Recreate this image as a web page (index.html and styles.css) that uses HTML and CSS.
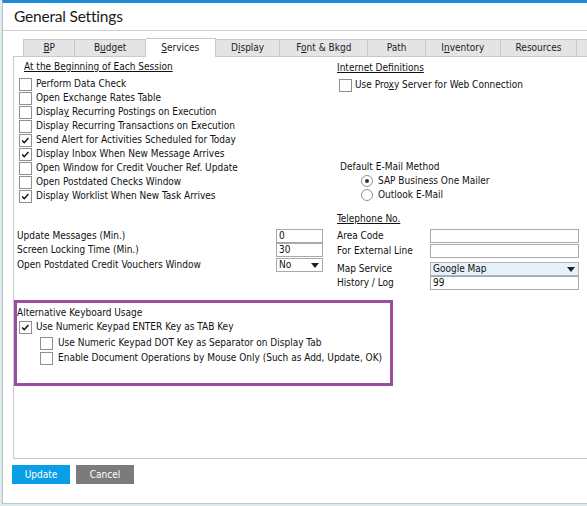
FILE: index.html
```html
<!DOCTYPE html>
<html lang="en">
<head>
    <meta charset="UTF-8">
    <title>General Settings</title>
    <link rel="stylesheet" href="styles.css">
</head>
<body>

    <div class="window">
        <!-- Title -->
        <div class="title">General Settings</div>

        <!-- Tabs -->
        <div class="tabs">
            <div class="tab t-bp"><u>B</u>P</div>
            <div class="tab t-budget">B<u>u</u>dget</div>
            <div class="tab t-services active"><u>S</u>ervices</div>
            <div class="tab t-display">D<u>i</u>splay</div>
            <div class="tab t-font">F<u>o</u>nt &amp; Bkgd</div>
            <div class="tab t-path">Path</div>
            <div class="tab t-inventory">I<u>n</u>ventory</div>
            <div class="tab t-resources">Resources</div>
            <div class="tab t-more"></div>
        </div>

        <!-- Services panel -->
        <div class="panel">
            <div class="section top">
                <div class="col-left">
                    <div class="heading session-heading">At the Beginning of Each Session</div>
                    <div class="check-list">
                        <div class="check-row"><span class="box"></span><span>Perform Data Check</span></div>
                        <div class="check-row"><span class="box"></span><span>Open Exchange Rates Table</span></div>
                        <div class="check-row"><span class="box"></span><span>Displa<u>y</u> Recurring Postings on Execution</span></div>
                        <div class="check-row"><span class="box"></span><span>Display Recurring Transactions on Execution</span></div>
                        <div class="check-row"><span class="box checked"><svg viewBox="0 0 13 13"><path d="M2.5 6.5 L5 9 L10 3.5"/></svg></span><span>Send Alert for Activities Scheduled for Today</span></div>
                        <div class="check-row"><span class="box checked"><svg viewBox="0 0 13 13"><path d="M2.5 6.5 L5 9 L10 3.5"/></svg></span><span>Display Inbox When New Message Arrives</span></div>
                        <div class="check-row"><span class="box"></span><span>Open Window for Credit Voucher Ref. Update</span></div>
                        <div class="check-row"><span class="box"></span><span>Open Postdated Checks Window</span></div>
                        <div class="check-row"><span class="box checked"><svg viewBox="0 0 13 13"><path d="M2.5 6.5 L5 9 L10 3.5"/></svg></span><span>Display Worklist When New Task Arrives</span></div>
                    </div>
                </div>
                <div class="col-right">
                    <div class="heading internet-heading">Internet Definitions</div>
                    <div class="check-row proxy-row"><span class="box"></span><span>Use Pro<u>x</u>y Server for Web Connection</span></div>

                    <div class="mail-label">Default E-Mail Method</div>
                    <div class="radio-row"><span class="radio on"></span><span>SAP Business One Mailer</span></div>
                    <div class="radio-row"><span class="radio"></span><span>Outlook E-Mail</span></div>
                </div>
            </div>

            <div class="section mid">
                <div class="col-left">
                    <div class="field-row first">
                        <span class="field-label">Update Messages (Min.)</span>
                        <span class="input small">0</span>
                    </div>
                    <div class="field-row">
                        <span class="field-label">Screen Locking Time (Min.)</span>
                        <span class="input small">30</span>
                    </div>
                    <div class="field-row gap1">
                        <span class="field-label">Open Postdated Credit Vouchers Window</span>
                        <span class="input small select">No<span class="arrow"></span></span>
                    </div>
                </div>
                <div class="col-right">
                    <div class="heading">Telephone No.</div>
                    <div class="field-row phone area">
                        <span class="phone-label">Area Code</span>
                        <span class="input wide"></span>
                    </div>
                    <div class="field-row phone external">
                        <span class="phone-label">For External Line</span>
                        <span class="input wide"></span>
                    </div>
                    <div class="field-row phone map">
                        <span class="phone-label">Map Service</span>
                        <span class="input wide select map-select">Google Map<span class="arrow"></span></span>
                    </div>
                    <div class="field-row phone history">
                        <span class="phone-label">History / Log</span>
                        <span class="input wide">99</span>
                    </div>
                </div>
            </div>

            <!-- Alternative keyboard -->
            <div class="kbd-box">
                <div class="kbd-title">Alternative Keyboard Usage</div>
                <div class="check-row kbd-main"><span class="box checked"><svg viewBox="0 0 13 13"><path d="M2.5 6.5 L5 9 L10 3.5"/></svg></span><span>Use Numeric Keypad ENTER Key as TAB Key</span></div>
                <div class="check-row kbd-sub dot"><span class="box"></span><span>Use Numeric Keypad DOT Key as Separator on Display Tab</span></div>
                <div class="check-row kbd-sub mouse"><span class="box"></span><span>Enable Document Operations by Mouse Only (Such as Add, Update, OK)</span></div>
            </div>
        </div>

        <!-- Buttons -->
        <div class="buttons">
            <button class="btn btn-update">Update</button>
            <button class="btn btn-cancel">Cancel</button>
        </div>
    </div>

</body>
</html>
```

FILE: styles.css
```css
body {
    margin: 0;
    padding: 0;
    background-color: #dcedf2;
    font-family: 'DejaVu Sans Condensed', 'DejaVu Sans', sans-serif;
    font-size: 10px;
    color: #111;
    width: 587px;
    height: 506px;
    overflow: hidden;
}

u {
    text-decoration: underline;
    text-underline-offset: 1px;
}

/* Window */
.window {
    margin-left: 2px;
    height: 504px;
    box-sizing: border-box;
    background-color: #fff;
    border-top: 3px solid #1a8bd6;
    border-left: 1px solid #bdbdbd;
    border-bottom: 1px solid #c4c4c4;
}

.title {
    height: 28px;
    box-sizing: border-box;
    padding-left: 11px;
    padding-top: 4px;
    font-family: 'Lato', 'Noto Sans', sans-serif;
    font-size: 15.5px;
    letter-spacing: -0.2px;
    color: #1a1a1a;
    border-bottom: 1px solid #d2d2d2;
}

/* Tabs */
.tabs {
    display: flex;
    align-items: flex-end;
    padding-top: 7px;
    padding-left: 20px;
    position: relative;
    z-index: 1;
}
.tab {
    height: 17px;
    box-sizing: border-box;
    background-color: #e4e4e4;
    border-top: 1px solid #c9c9c9;
    border-right: 1px solid #c9c9c9;
    text-align: center;
    line-height: 16px;
    color: #1c1c2c;
}
.t-bp { width: 53px; border-left: 1px solid #c9c9c9; }
.t-budget { width: 71px; }
.t-services { width: 71px; }
.t-display { width: 65px; }
.t-font { width: 89px; }
.t-path { width: 58px; }
.t-inventory { width: 76px; }
.t-resources { width: 77px; }
.t-more { width: 10px; border-right: none; }
.tab.active {
    height: 19px;
    margin-bottom: -1px;
    background-color: #fff;
    line-height: 18px;
}

/* Panel */
.panel {
    margin-left: 10px;
    height: 403px;
    box-sizing: border-box;
    border-top: 1px solid #c9c9c9;
    border-left: 1px solid #c9c9c9;
    border-bottom: 1px solid #c9c9c9;
}
.section {
    display: flex;
    padding-left: 3px;
}
.col-left {
    width: 320px;
}
.heading {
    height: 14px;
    line-height: 14px;
    text-decoration: underline;
    text-underline-offset: 1px;
}

.top {
    padding-top: 3px;
    height: 144px;
}
.session-heading {
    margin-left: 7px;
}
.check-list {
    margin-top: 3px;
}
.check-row {
    display: flex;
    align-items: center;
    height: 14px;
    line-height: 14px;
    white-space: nowrap;
}
.box {
    width: 13px;
    height: 13px;
    box-sizing: border-box;
    border: 1px solid #8f8f8f;
    background-color: #fff;
    margin-left: 2px;
    margin-right: 4px;
    flex-shrink: 0;
}
.box svg {
    display: block;
    width: 11px;
    height: 11px;
    margin: 0;
}
.box svg path {
    fill: none;
    stroke: #111;
    stroke-width: 1.7;
}

.internet-heading {
    margin-top: 1px;
}
.proxy-row {
    margin-top: 3px;
}
.proxy-row .box {
    margin-right: 3px;
}
.mail-label {
    margin-top: 68px;
    margin-left: 3px;
    height: 14px;
    line-height: 14px;
}
.radio-row {
    display: flex;
    align-items: center;
    height: 14px;
    line-height: 14px;
}
.radio {
    width: 12px;
    height: 12px;
    box-sizing: border-box;
    border: 1px solid #8f8f8f;
    border-radius: 50%;
    margin-left: 24px;
    margin-right: 5px;
    display: flex;
    align-items: center;
    justify-content: center;
}
.radio.on::after {
    content: "";
    width: 4px;
    height: 4px;
    border-radius: 50%;
    background-color: #333;
}

/* Fields */
.mid {
    margin-top: 8px;
    height: 78px;
}
.field-row {
    display: flex;
    align-items: center;
    height: 14px;
    line-height: 14px;
}
.field-row.first {
    margin-top: 17px;
}
.field-row.gap1 {
    margin-top: 1px;
}
.field-label {
    width: 259px;
}
.input {
    height: 14px;
    box-sizing: border-box;
    border: 1px solid #a9a9a9;
    background-color: #fff;
    padding-left: 2px;
    line-height: 12px;
    position: relative;
}
.input.small {
    width: 47px;
}
.input.wide {
    width: 149px;
}
.arrow {
    position: absolute;
    right: 3px;
    top: 4px;
    border-left: 4px solid transparent;
    border-right: 4px solid transparent;
    border-top: 5px solid #222;
}
.map-select {
    background-color: #e5f1fb;
    border-color: #b2b2b2;
}
.phone-label {
    width: 93px;
}
.phone.area { margin-top: 3px; }
.phone.external { margin-top: 1px; }
.phone.map { margin-top: 4px; }

/* Alternative keyboard */
.kbd-box {
    margin-top: 10px;
    width: 379px;
    height: 86px;
    box-sizing: border-box;
    border: 3px solid #9b4ea0;
    padding-top: 3px;
}
.kbd-title {
    height: 14px;
    line-height: 14px;
}
.kbd-sub {
    padding-left: 21px;
}
.kbd-sub.dot {
    margin-top: 2px;
}
.kbd-sub.mouse {
    margin-top: 1px;
}
.kbd-sub .box {
    margin-right: 5px;
}

/* Buttons */
.buttons {
    display: flex;
    gap: 6px;
    padding-left: 9px;
    margin-top: 6px;
}
.btn {
    width: 58px;
    height: 19px;
    border: none;
    padding: 0;
    color: #fff;
    font-family: 'DejaVu Sans Condensed', 'DejaVu Sans', sans-serif;
    font-size: 10px;
    cursor: pointer;
}
.btn-update {
    background-color: #0a9ee6;
}
.btn-cancel {
    background-color: #7b7b7b;
}
```
